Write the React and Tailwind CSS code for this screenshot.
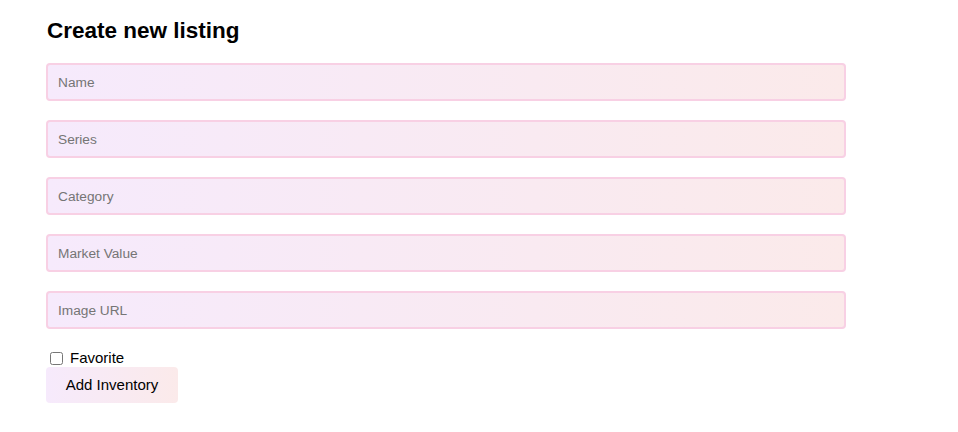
import { useState } from "react";

const fields = ["Name", "Series", "Category", "Market Value", "Image URL"];

function App() {
  const [values, setValues] = useState({});
  const [favorite, setFavorite] = useState(false);

  return (
    <div className="px-[46px] pt-[15px] font-['Liberation_Sans',Arial,sans-serif] text-black">
      <h2 className="text-[22.5px] leading-[32px] font-bold mb-[16px] ml-px">
        Create new listing
      </h2>
      <form className="flex flex-col w-[800px]" onSubmit={(e) => e.preventDefault()}>
        <div className="flex flex-col gap-[19px]">
          {fields.map((f) => (
            <input
              key={f}
              type="text"
              placeholder={f}
              value={values[f] || ""}
              onChange={(e) => setValues({ ...values, [f]: e.target.value })}
              className="h-[38px] px-[10px] text-[13.7px] rounded-[4px] border-2 border-[#f8d0e4] bg-gradient-to-r from-[#f6eafc] to-[#fbeaea] placeholder:text-[#757575] outline-none"
            />
          ))}
        </div>
        <label className="flex items-center mt-[20px] h-[18px] text-[15px]">
          <input
            type="checkbox"
            checked={favorite}
            onChange={(e) => setFavorite(e.target.checked)}
            className="w-[13px] h-[13px] ml-[4px] mr-[7px]"
          />
          Favorite
        </label>
        <button
          type="submit"
          className="self-start w-[132px] h-[36px] rounded-[4px] text-[15px] bg-gradient-to-r from-[#f6eafc] to-[#fbeaea]"
        >
          Add Inventory
        </button>
      </form>
    </div>
  );
}

export default App;
